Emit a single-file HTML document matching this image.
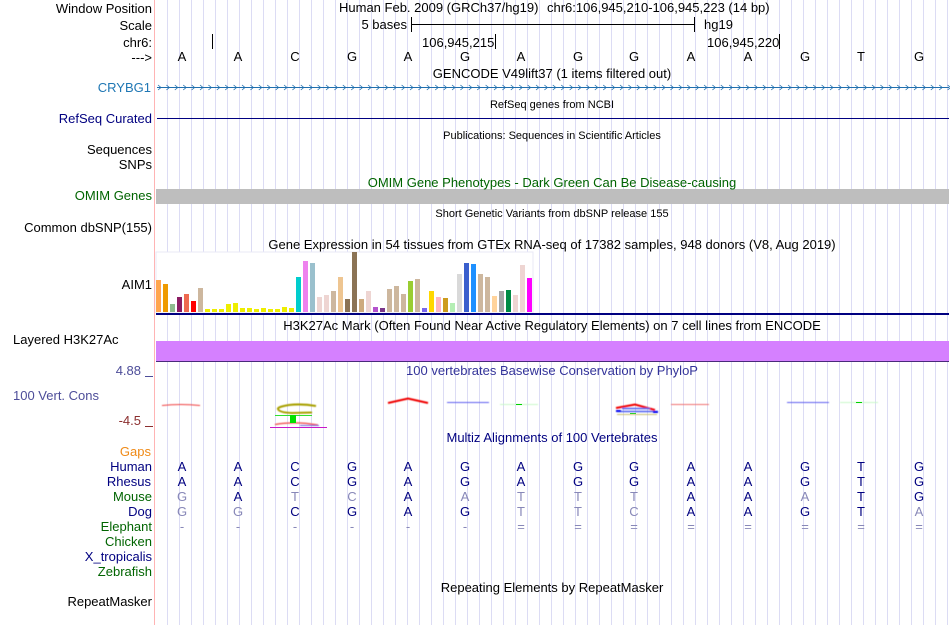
<!DOCTYPE html>
<html><head><meta charset="utf-8"><style>
html,body{margin:0;padding:0;background:#fff;width:950px;height:625px;overflow:hidden}
svg{display:block;position:absolute;left:0;top:0}
text{font-family:"Liberation Sans",sans-serif;font-size:13px;fill:#000}
.l{text-anchor:end}.c{text-anchor:middle}
.s{font-size:11px}
.n{fill:#000080}.g{fill:#006400}
.f{fill:#8888b8}
</style></head><body>
<svg width="950" height="625" viewBox="0 0 950 625" xmlns="http://www.w3.org/2000/svg">
<defs><filter id="b" x="-5%" y="-50%" width="110%" height="200%"><feGaussianBlur stdDeviation="0.4"/></filter></defs>
<g id="grid" stroke="#dcdcf4" stroke-width="1"></g>
<rect x="154" y="0" width="1" height="625" fill="#ffb4b4"/>

<rect x="156" y="189" width="793" height="15" fill="#bebebe"/>
<rect x="156" y="341" width="793" height="20" fill="#d580ff"/>
<rect x="156" y="361" width="793" height="1" fill="#4a2a7a"/>
<rect x="156" y="252" width="377" height="61" fill="#fff" stroke="#e8e8f6" stroke-width="1"/>
<g id="bars"></g>
<rect x="156" y="313" width="793" height="2" fill="#000080"/>

<!-- labels -->
<text x="152" y="13" class="l">Window Position</text>
<text x="152" y="30" class="l">Scale</text>
<text x="152" y="47" class="l">chr6:</text>
<text x="152" y="62" class="l">---&gt;</text>
<text x="151" y="92" class="l" style="fill:#1f77b4">CRYBG1</text>
<text x="152" y="123" class="l n">RefSeq Curated</text>
<text x="152" y="154" class="l">Sequences</text>
<text x="152" y="169" class="l">SNPs</text>
<text x="152" y="200" class="l g">OMIM Genes</text>
<text x="152" y="232" class="l">Common dbSNP(155)</text>
<text x="152" y="289" class="l">AIM1</text>
<text x="13" y="344">Layered H3K27Ac</text>
<text x="141" y="375" class="l" style="fill:#4d4d99">4.88</text>
<text x="13" y="400" style="fill:#4d4d99">100 Vert. Cons</text>
<text x="141" y="425" class="l" style="fill:#8b2e2e">-4.5</text>
<text x="151" y="456" class="l" style="fill:#ef8a17">Gaps</text>
<text x="152" y="471" class="l n">Human</text>
<text x="151" y="486" class="l n">Rhesus</text>
<text x="152" y="501" class="l g">Mouse</text>
<text x="152" y="516" class="l n">Dog</text>
<text x="152" y="531" class="l g">Elephant</text>
<text x="152" y="546" class="l g">Chicken</text>
<text x="152" y="561" class="l n">X_tropicalis</text>
<text x="152" y="576" class="l g">Zebrafish</text>
<text x="152" y="606" class="l">RepeatMasker</text>

<!-- headers -->
<text x="339" y="12">Human Feb. 2009 (GRCh37/hg19)</text>
<text x="547" y="12">chr6:106,945,210-106,945,223 (14 bp)</text>
<text x="407" y="29" class="l">5 bases</text>
<rect x="411" y="17" width="1" height="15" fill="#000"/>
<rect x="411" y="24" width="284" height="1" fill="#000"/>
<rect x="694" y="17" width="1" height="15" fill="#000"/>
<text x="704" y="29">hg19</text>
<rect x="212" y="34" width="1" height="15" fill="#000"/>
<text x="422" y="47">106,945,215</text>
<rect x="495" y="34" width="1" height="15" fill="#000"/>
<text x="707" y="47">106,945,220</text>
<rect x="779" y="34" width="1" height="15" fill="#000"/>
<g id="bases"></g>
<text x="552" y="78" class="c">GENCODE V49lift37 (1 items filtered out)</text>
<rect x="157" y="87" width="792" height="1" fill="#1f6fae"/>
<g id="chev" fill="none" stroke="#1f6fae" stroke-width="0.8"></g>
<text x="552" y="108" class="c s">RefSeq genes from NCBI</text>
<rect x="157" y="118" width="792" height="1" fill="#000080"/>
<text x="552" y="139" class="c s">Publications: Sequences in Scientific Articles</text>
<text x="552" y="187" class="c g">OMIM Gene Phenotypes - Dark Green Can Be Disease-causing</text>
<text x="552" y="217" class="c s">Short Genetic Variants from dbSNP release 155</text>
<text x="552" y="249" class="c">Gene Expression in 54 tissues from GTEx RNA-seq of 17382 samples, 948 donors (V8, Aug 2019)</text>
<text x="552" y="330" class="c">H3K27Ac Mark (Often Found Near Active Regulatory Elements) on 7 cell lines from ENCODE</text>
<text x="552" y="375" class="c" style="fill:#333399">100 vertebrates Basewise Conservation by PhyloP</text>
<text x="552" y="442" class="c n">Multiz Alignments of 100 Vertebrates</text>
<text x="552" y="592" class="c">Repeating Elements by RepeatMasker</text>

<!-- conservation wiggles -->
<rect x="145" y="376" width="8" height="1" fill="#4d4d99"/>
<rect x="145" y="426" width="8" height="1" fill="#8b2e2e"/>
<g filter="url(#b)">
<path d="M162 405.500Q181 403.500 200 405.500" stroke="#f04040" stroke-width="1" fill="none"/>
<path d="M388 403L408 398.500L428 403" stroke="#f00000" stroke-width="2" fill="none"/>
<path d="M316 406Q302 403.500 289 405Q277 407 278 409Q279 412.500 292 413L312 412.500" stroke="#a8a000" stroke-width="2" fill="none"/>
<path d="M275 424.500Q295 421 318 425" stroke="#f06060" stroke-width="1.500" fill="none"/>
<rect x="300" y="425" width="19" height="1" fill="#6868dd"/>
<rect x="447" y="402" width="42" height="1" fill="#6060f0"/>
<rect x="500" y="404" width="38" height="1" fill="#c8f8c8"/>
<path d="M616 408L635 404.500L655 410" stroke="#f00000" stroke-width="2" fill="none"/>
<path d="M617 411.500H658M622 408.500H650" stroke="#5060f0" stroke-width="1.500" fill="none"/>
<rect x="616" y="410" width="5" height="2" fill="#0000f0"/>
<rect x="653" y="411" width="5" height="2" fill="#0000f0"/>
<rect x="617" y="414" width="40" height="1" fill="#c8c070"/>
<rect x="671" y="404" width="38" height="1" fill="#f07070"/>
<rect x="787" y="402" width="42" height="1" fill="#6060f0"/>
<rect x="840" y="402" width="38" height="1" fill="#c8f8c8"/>
</g>
<rect x="275" y="415" width="37" height="1" fill="#30e030"/>
<rect x="290" y="415" width="6" height="8" fill="#00e000"/>
<rect x="270" y="427" width="57" height="1" fill="#c818c8"/>
<rect x="516" y="404" width="6" height="1" fill="#00d000"/>
<rect x="630" y="413" width="6" height="1" fill="#30d030"/>
<rect x="856" y="402" width="6" height="1" fill="#00d000"/>

<g id="maf"></g>
</svg>
<script>
var NS="http://www.w3.org/2000/svg";
function el(p,n,a,t){var e=document.createElementNS(NS,n);for(var k in a)e.setAttribute(k,a[k]);if(t)e.textContent=t;document.getElementById(p).appendChild(e);}
for(var x=167.500;x<950;x+=12)el("grid","line",{x1:x,x2:x,y1:0,y2:625});
var b=[["FFA54F",105],["EE9A00",117],["8FBC8F",177],["8B1C62",156],["EE6A50",147],["FF0000",168],["CDB79E",129],
["EEEE00",192],["EEEE00",192],["EEEE00",192],["EEEE00",177],["EEEE00",174],["EEEE00",189],["EEEE00",189],["EEEE00",192],["EEEE00",189],["EEEE00",192],["EEEE00",192],["EEEE00",186],["EEEE00",189],
["00CDCD",96],["EE82EE",48],["9AC0CD",54],["EED5D2",156],["EED5D2",150],["CDB79E",138],["EEC591",96],["8B7355",162],["8B7355",21],["CDAA7D",162],["EED5D2",138],["B452CD",186],["7A378B",189],["CDB79E",132],["CDB79E",123],["CDB79E",147],["9ACD32",108],["CDB79E",102],["7A67EE",189],["FFD700",138],["FFB6C1",156],["CD9B1D",159],["B4EEB4",174],["D9D9D9",87],["3A5FCD",54],["1E90FF",57],["CDB79E",87],["CDB79E",96],["FFD39B",153],["A6A6A6",138],["008B45",135],["EED5D2",150],["EED5D2",60],["FF00FF",99]];
b.forEach(function(d,i){var y=245+Math.round(d[1]/3);el("bars","rect",{x:156+7*i,y:y,width:5,height:312-y,fill:"#"+d[0]});});
var cx=[182,238,295,352,408,465,521,578,634,691,748,805,861,919];
var seq="AACGAGAGGAAGTG";
seq.split("").forEach(function(c,i){el("bases","text",{x:cx[i],y:61,"class":"c"},c);});
for(var x=158;x<948;x+=8.4)el("chev","path",{d:"M"+x.toFixed(1)+" 85L"+(x+3).toFixed(1)+" 87.500L"+x.toFixed(1)+" 90"});
var rows=[[471,"AACGAGAGGAAGTG"],[486,"AACGAGAGGAAGTG"],[501,"gAtcAatttAAaTG"],[516,"ggCGAGttcAAGTa"]];
rows.forEach(function(r){r[1].split("").forEach(function(c,i){var low=c>="a";el("maf","text",{x:cx[i],y:r[0],"class":"c "+(low?"f":"n")},c.toUpperCase());});});
"------========".split("").forEach(function(c,i){el("maf","text",{x:cx[i],y:531,"class":"c f"},c);});
</script>
</body></html>
